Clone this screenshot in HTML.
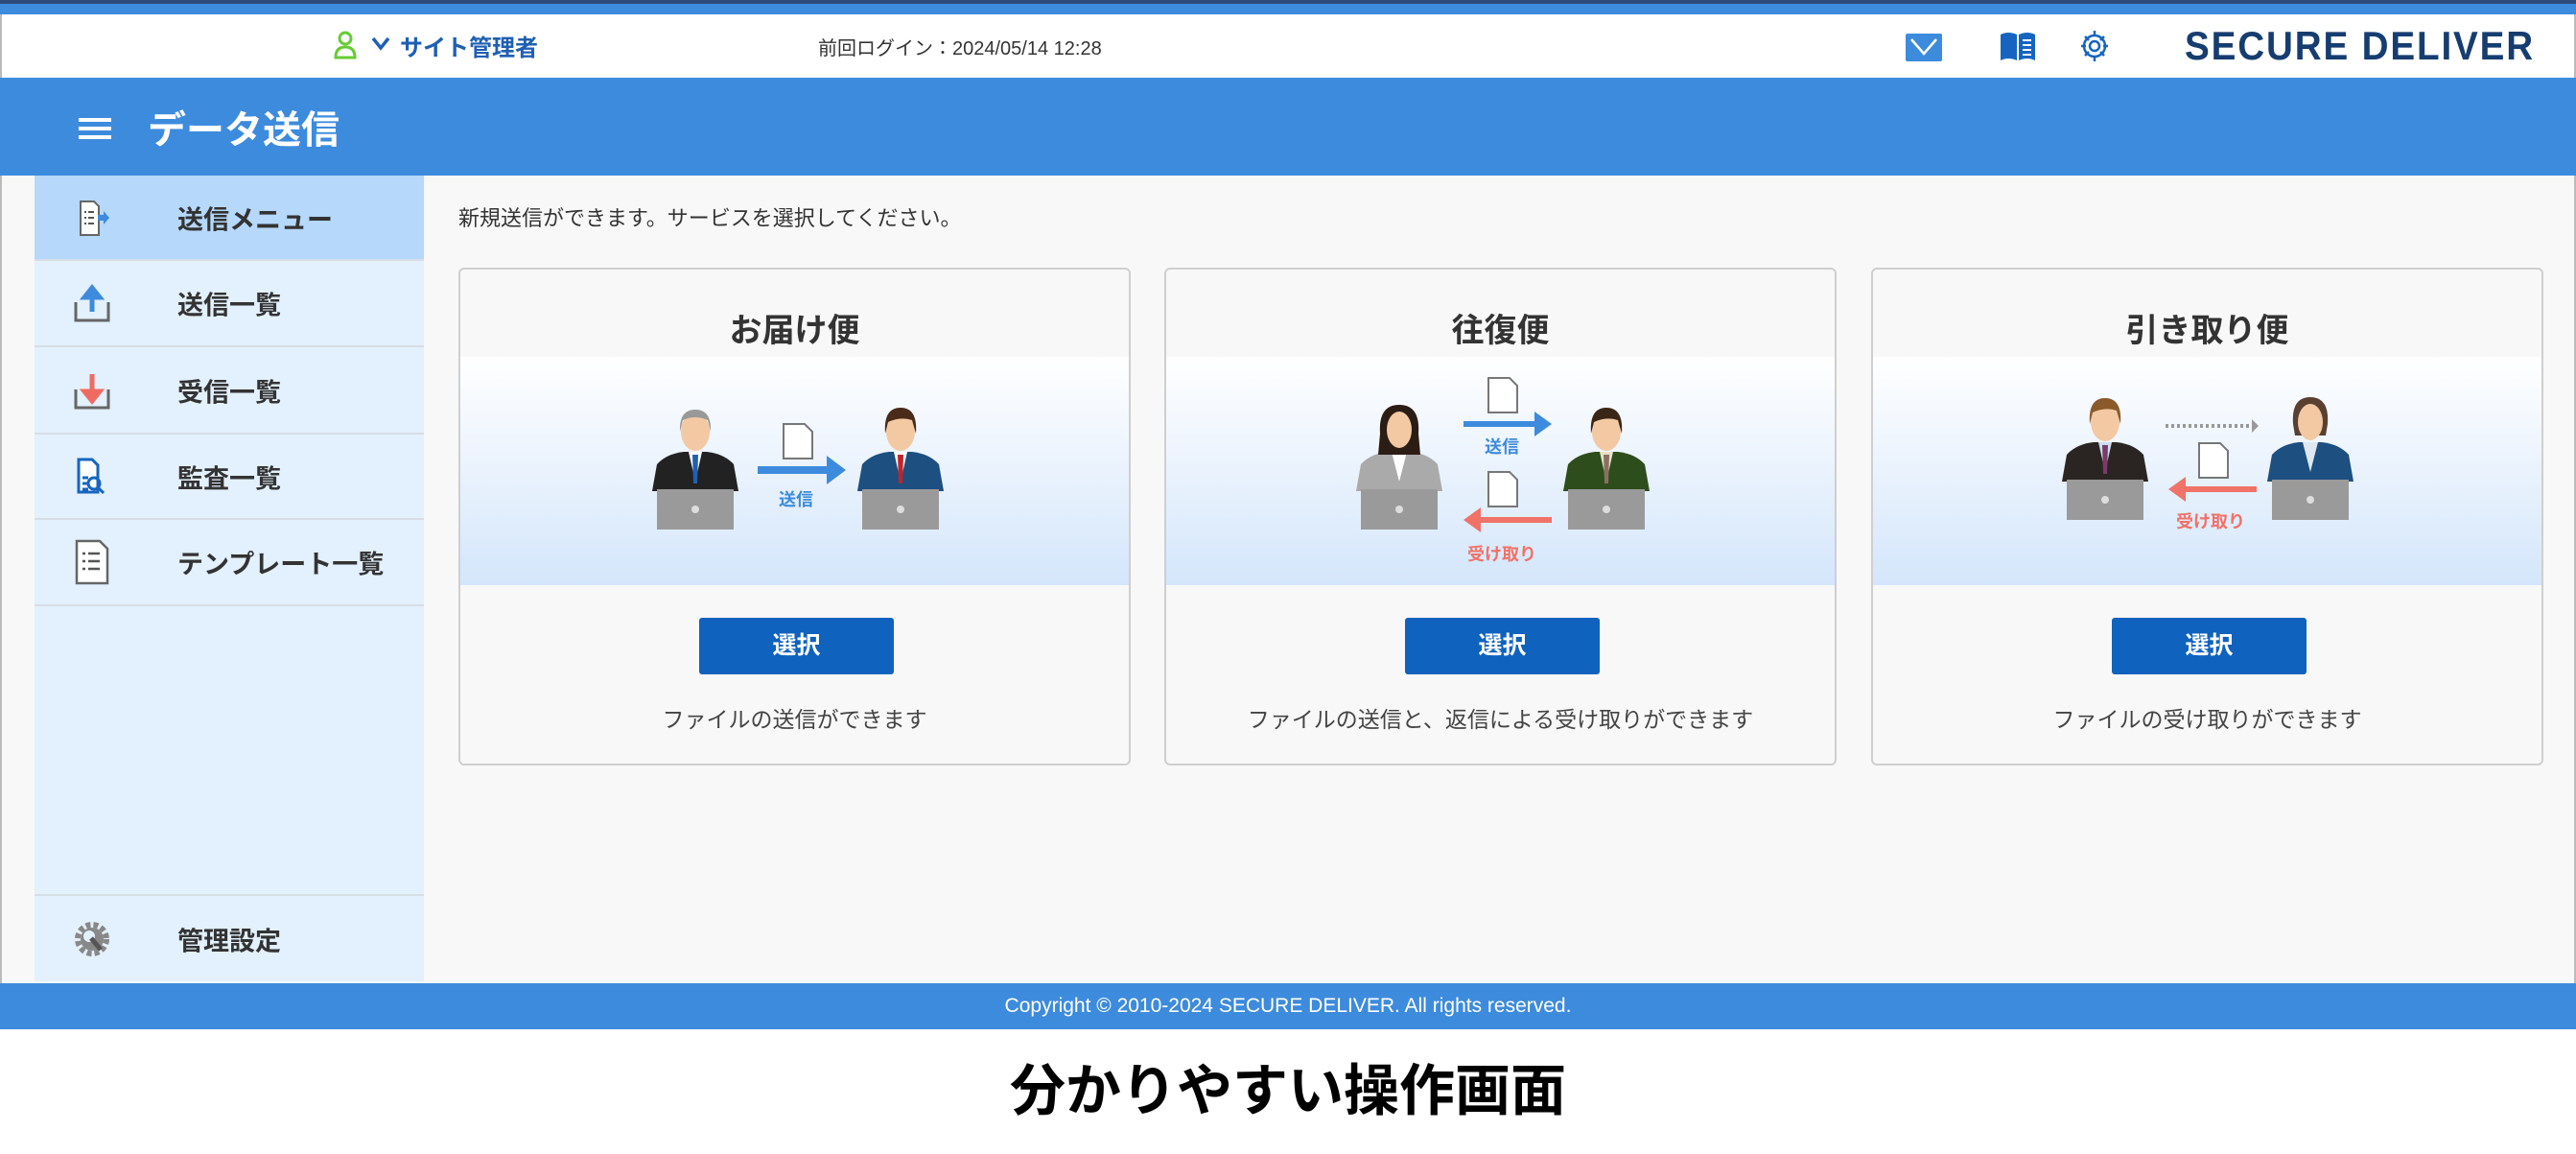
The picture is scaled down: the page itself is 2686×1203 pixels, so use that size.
<!DOCTYPE html>
<html><head><meta charset="utf-8"><style>
*{margin:0;padding:0;box-sizing:border-box}
body{width:2686px;height:1203px;background:#fff;font-family:"Liberation Sans","Noto Sans CJK JP",sans-serif;position:relative;overflow:hidden}
.abs{position:absolute}
.frame{left:0;top:0;width:2686px;height:1073px;border-left:2px solid #bbb;border-right:2px solid #bbb;background:#f8f8f8}
.topline{left:0;top:0;width:2686px;height:4px;background:#2d4a78}
.topblue{left:0;top:4px;width:2686px;height:11px;background:#3d8bdd}
.header{left:2px;top:15px;width:2682px;height:66px;background:#fff}
.bar{left:0;top:81px;width:2686px;height:102px;background:#3d8bdd}
.side{left:36px;top:183px;width:406px;height:840px;background:#e3f0fd}
.item{position:absolute;left:0;width:406px;border-bottom:2px solid #d6dde5;font-size:27px;font-weight:bold;color:#333}
.item span{position:absolute;left:149px;top:50%;transform:translateY(-50%)}
.item svg{position:absolute;left:40px;top:50%;transform:translateY(-50%)}
.card{position:absolute;top:279px;width:701px;height:519px;border:2px solid #cfcfcf;border-radius:6px;background:#f8f8f8;overflow:hidden}
.card h2{position:absolute;top:36px;width:100%;text-align:center;font-size:34px;font-weight:bold;color:#333}
.card .img{position:absolute;top:91px;left:0;width:701px;height:238px;background:linear-gradient(#fff,#d4e6fb)}
.card .btn{position:absolute;left:249px;top:363px;width:203px;height:59px;background:#0f62be;border-radius:3px;color:#fff;font-size:25px;font-weight:bold;text-align:center;line-height:59px}
.card p{position:absolute;top:450px;width:100%;text-align:center;font-size:23px;color:#444}
.footer{left:0;top:1025px;width:2686px;height:48px;background:#3d8bdd;color:#fff;font-size:21px;text-align:center;line-height:48px}
</style></head><body>
<div class="abs frame"></div>
<div class="abs topline"></div><div class="abs topblue"></div>
<div class="abs header">
 <svg class="abs" style="left:345px;top:17px" width="26" height="30" viewBox="0 0 26 30"><circle cx="13" cy="8" r="6" fill="none" stroke="#6c3" stroke-width="3"/><path d="M3 28 Q3 17 13 17 Q23 17 23 28 Z" fill="none" stroke="#6c3" stroke-width="3"/></svg>
 <svg class="abs" style="left:385px;top:22px" width="20" height="16" viewBox="0 0 20 16"><path d="M2 3 L10 13 L18 3" fill="none" stroke="#1f5fb3" stroke-width="3.5"/></svg>
 <div class="abs" style="left:415px;top:15px;font-size:24px;font-weight:bold;color:#1f5fb3">サイト管理者</div>
 <div class="abs" style="left:851px;top:19px;font-size:20px;color:#333">前回ログイン：2024/05/14 12:28</div>
 <svg class="abs" style="left:1985px;top:20px" width="38" height="29" viewBox="0 0 38 29"><rect width="38" height="29" rx="2" fill="#3d8bdd"/><path d="M6 6 L19 21 L32 6" fill="none" stroke="#fff" stroke-width="2.5"/></svg>
 <svg class="abs" style="left:2083px;top:15px" width="38" height="36" viewBox="0 0 38 36"><path d="M1 6 Q9 2 18 6 L18 33 Q9 29 1 33 Z" fill="#1565c0"/><path d="M20 6 Q29 2 37 6 L37 33 Q29 29 20 33 Z" fill="#1565c0"/><path d="M24 12h9M24 17h9M24 22h9M24 27h9" stroke="#fff" stroke-width="2"/></svg>
 <svg class="abs" style="left:2164px;top:13px" width="36" height="40" viewBox="0 0 36 40"><g fill="none" stroke="#1565c0" stroke-width="2.5"><circle cx="18" cy="20" r="11"/><circle cx="18" cy="20" r="5"/><path d="M18 4v5M18 31v5M4 20h5M27 20h5M8 10l4 4M24 26l4 4M28 10l-4 4M12 26l-4 4"/></g></svg>
 <div class="abs" style="left:2276px;top:9px;font-size:42px;font-weight:bold;color:#163d70;letter-spacing:2px;white-space:nowrap;transform:scaleX(0.92);transform-origin:left">SECURE DELIVER</div>
</div>
<div class="abs bar">
 <svg class="abs" style="left:82px;top:41px" width="34" height="24" viewBox="0 0 34 24"><path d="M0 3h34M0 12h34M0 21h34" stroke="#fff" stroke-width="4"/></svg>
 <div class="abs" style="left:154px;top:22px;font-size:40px;font-weight:bold;color:#fff">データ送信</div>
</div>
<div class="abs side">
 <div class="item" style="top:0;height:89px;background:#b5d8fb"><svg width="40" height="40" viewBox="0 0 40 40"><path d="M8 3h14l5 5v30H8z" fill="#fff" stroke="#666" stroke-width="2"/><path d="M12 14h2M16 14h6M12 20h2M16 20h6M12 26h2M16 26h6" stroke="#555" stroke-width="2"/><path d="M26 17h6v-4l6 7-6 7v-4h-6z" fill="#3d8bdd"/></svg><span>送信メニュー</span></div>
 <div class="item" style="top:89px;height:90px"><svg width="40" height="42" viewBox="0 0 40 42"><path d="M3 20v19h34V20" fill="none" stroke="#666" stroke-width="3"/><path d="M20 30V10M12 15l8-10 8 10z" stroke="#3d8bdd" stroke-width="5" fill="#3d8bdd"/></svg><span>送信一覧</span></div>
 <div class="item" style="top:179px;height:91px"><svg width="40" height="42" viewBox="0 0 40 42"><path d="M3 20v19h34V20" fill="none" stroke="#666" stroke-width="3"/><path d="M20 4v20M12 22l8 10 8-10z" stroke="#ef6b61" stroke-width="5" fill="#ef6b61"/></svg><span>受信一覧</span></div>
 <div class="item" style="top:270px;height:89px"><svg width="40" height="42" viewBox="0 0 40 42"><path d="M6 3h14l6 6v28H6z" fill="#fff" stroke="#1565c0" stroke-width="3"/><circle cx="22" cy="28" r="6" fill="none" stroke="#1565c0" stroke-width="3"/><path d="M26 32l6 6M10 22h6M10 28h5M10 34h6" stroke="#1565c0" stroke-width="3"/></svg><span>監査一覧</span></div>
 <div class="item" style="top:359px;height:90px"><svg width="40" height="48" viewBox="0 0 40 48"><path d="M4 2h24l8 8v36H4z" fill="#fff" stroke="#666" stroke-width="2.5"/><path d="M10 15h3M16 15h12M10 23h3M16 23h12M10 31h3M16 31h12" stroke="#555" stroke-width="2.5"/></svg><span>テンプレート一覧</span></div>
 <div class="item" style="top:749px;height:91px;border-top:2px solid #d6dde5;border-bottom:none"><svg width="40" height="42" viewBox="0 0 40 42"><circle cx="20" cy="21" r="15" fill="none" stroke="#888" stroke-width="6" stroke-dasharray="5 3"/><circle cx="20" cy="21" r="12" fill="#888"/><circle cx="17" cy="18" r="6" fill="#e3f0fd"/><path d="M19 20l10 12" stroke="#555" stroke-width="5"/></svg><span>管理設定</span></div>
</div>
<div class="abs" style="left:478px;top:210px;font-size:22px;color:#333">新規送信ができます。サービスを選択してください。</div>

<svg width="0" height="0" style="position:absolute"><defs>
<g id="lap"><rect x="-40" y="138" width="80" height="42" fill="#9a9a9a"/><circle cx="0" cy="159" r="4" fill="#ddd"/></g>
<g id="doc"><path d="M0 0h22l8 8v28H0z" fill="#fff" stroke="#777" stroke-width="2"/></g>
</defs></svg>

<div class="card" style="left:478px"><h2>お届け便</h2><div class="img"><svg width="701" height="238">
 <g transform="translate(245,0)"><path d="M-45 140L-40 112Q-30 101-12 99H12Q30 101 40 112L45 140Z" fill="#222"/><path d="M-7 99L0 130L7 99Z" fill="#fff"/><path d="M-3 102h6l-1 30h-4z" fill="#1f5fb3"/><ellipse cx="0" cy="78" rx="15" ry="20" fill="#f3c9a3"/><path d="M-16 78Q-17 55 0 55Q17 55 16 78L13 66Q0 60-13 66Z" fill="#999"/><use href="#lap"/></g>
 <g transform="translate(459,0)"><path d="M-45 140L-40 112Q-30 101-12 99H12Q30 101 40 112L45 140Z" fill="#1d4f80"/><path d="M-7 99L0 130L7 99Z" fill="#fff"/><path d="M-3 102h6l-1 30h-4z" fill="#c0242b"/><ellipse cx="0" cy="78" rx="15" ry="20" fill="#f3c9a3"/><path d="M-16 80Q-18 53 0 53Q18 53 16 80L12 66Q0 62-13 68Z" fill="#4a2a18"/><use href="#lap"/></g>
 <use href="#doc" x="337" y="70"/>
 <path d="M310 114h72v-11l20 15-20 15v-11h-72z" fill="#3d8bdd"/>
 <text x="350" y="155" font-size="18" font-weight="bold" fill="#3d8bdd" text-anchor="middle" font-family="Liberation Sans,Noto Sans CJK JP,sans-serif">送信</text>
</svg></div><div class="btn">選択</div><p>ファイルの送信ができます</p></div>

<div class="card" style="left:1214px"><h2>往復便</h2><div class="img"><svg width="701" height="238">
 <g transform="translate(243,0)"><path d="M-45 140L-40 112Q-30 101-12 99H12Q30 101 40 112L45 140Z" fill="#aaa"/><path d="M-8 99L0 130L8 99Z" fill="#fff"/><path d="M-20 80Q-22 50 0 50Q22 50 20 80L22 102H-22Z" fill="#2b1d14"/><ellipse cx="0" cy="76" rx="13" ry="19" fill="#f3c9a3"/><use href="#lap"/></g>
 <g transform="translate(459,0)"><path d="M-45 140L-40 112Q-30 101-12 99H12Q30 101 40 112L45 140Z" fill="#2e4d1c"/><path d="M-7 99L0 130L7 99Z" fill="#e8e0c8"/><path d="M-3 102h6l-1 30h-4z" fill="#8a7060"/><ellipse cx="0" cy="78" rx="15" ry="20" fill="#f3c9a3"/><path d="M-16 80Q-18 53 0 53Q18 53 16 80L12 66Q0 62-13 68Z" fill="#3a2616"/><use href="#lap"/></g>
 <use href="#doc" x="336" y="22"/>
 <path d="M310 67h74v-10l18 13-18 13v-10h-74z" fill="#3d8bdd"/>
 <text x="350" y="100" font-size="18" font-weight="bold" fill="#3d8bdd" text-anchor="middle" font-family="Liberation Sans,Noto Sans CJK JP,sans-serif">送信</text>
 <use href="#doc" x="336" y="120"/>
 <path d="M402 167h-74v-10l-18 13 18 13v-10h74z" fill="#f07268"/>
 <text x="350" y="212" font-size="18" font-weight="bold" fill="#f07268" text-anchor="middle" font-family="Liberation Sans,Noto Sans CJK JP,sans-serif">受け取り</text>
</svg></div><div class="btn">選択</div><p>ファイルの送信と、返信による受け取りができます</p></div>

<div class="card" style="left:1951px"><h2>引き取り便</h2><div class="img"><svg width="701" height="238">
 <g transform="translate(242,-10)"><path d="M-45 140L-40 112Q-30 101-12 99H12Q30 101 40 112L45 140Z" fill="#2a2523"/><path d="M-7 99L0 130L7 99Z" fill="#cde"/><path d="M-3 102h6l-1 30h-4z" fill="#7a3a6a"/><ellipse cx="0" cy="78" rx="15" ry="20" fill="#f3c9a3"/><path d="M-16 80Q-18 53 0 53Q18 53 16 80L12 66Q0 62-13 68Z" fill="#8a5a2a"/><use href="#lap"/></g>
 <g transform="translate(456,-10)"><path d="M-45 140L-40 112Q-30 101-12 99H12Q30 101 40 112L45 140Z" fill="#1d4f80"/><path d="M-8 99L0 130L8 99Z" fill="#dfe8f0"/><path d="M-18 80Q-20 52 0 52Q20 52 18 80L16 92H-16Z" fill="#5a4030"/><ellipse cx="0" cy="78" rx="13" ry="19" fill="#f3c9a3"/><use href="#lap"/></g>
 <path d="M305 72h90" stroke="#999" stroke-width="4" stroke-dasharray="3 3"/><path d="M395 65l7 7-7 7z" fill="#999"/>
 <use href="#doc" x="340" y="90"/>
 <path d="M400 135h-74v-10l-18 13 18 13v-10h74z" fill="#f07268"/>
 <text x="352" y="178" font-size="18" font-weight="bold" fill="#f07268" text-anchor="middle" font-family="Liberation Sans,Noto Sans CJK JP,sans-serif">受け取り</text>
</svg></div><div class="btn">選択</div><p>ファイルの受け取りができます</p></div>

<div class="abs footer">Copyright © 2010-2024 SECURE DELIVER. All rights reserved.</div>
<div class="abs" style="left:0;top:1090px;width:2686px;text-align:center;font-size:58px;font-weight:bold;color:#000">分かりやすい操作画面</div>
</body></html>
